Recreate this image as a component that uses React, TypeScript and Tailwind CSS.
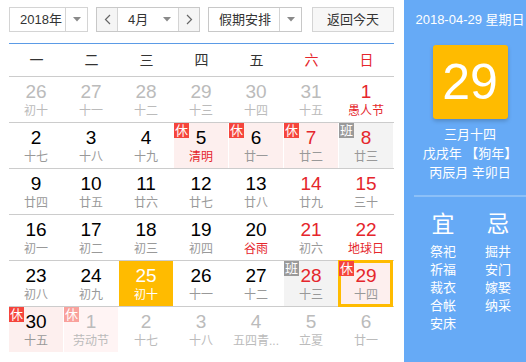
import React from "react";

type Cell = {
  d: number;
  l: string;
  other?: boolean;
  red?: boolean;
  lred?: boolean;
  badge?: "休" | "班";
  faded?: boolean;
  today?: boolean;
  selected?: boolean;
};

const rows: Cell[][] = [
  [
    { d: 26, l: "初十", other: true },
    { d: 27, l: "十一", other: true },
    { d: 28, l: "十二", other: true },
    { d: 29, l: "十三", other: true },
    { d: 30, l: "十四", other: true },
    { d: 31, l: "十五", other: true },
    { d: 1, l: "愚人节", red: true, lred: true },
  ],
  [
    { d: 2, l: "十七" },
    { d: 3, l: "十八" },
    { d: 4, l: "十九" },
    { d: 5, l: "清明", lred: true, badge: "休" },
    { d: 6, l: "廿一", badge: "休" },
    { d: 7, l: "廿二", red: true, badge: "休" },
    { d: 8, l: "廿三", red: true, badge: "班" },
  ],
  [
    { d: 9, l: "廿四" },
    { d: 10, l: "廿五" },
    { d: 11, l: "廿六" },
    { d: 12, l: "廿七" },
    { d: 13, l: "廿八" },
    { d: 14, l: "廿九", red: true },
    { d: 15, l: "三十", red: true },
  ],
  [
    { d: 16, l: "初一" },
    { d: 17, l: "初二" },
    { d: 18, l: "初三" },
    { d: 19, l: "初四" },
    { d: 20, l: "谷雨", lred: true },
    { d: 21, l: "初六", red: true },
    { d: 22, l: "地球日", red: true, lred: true },
  ],
  [
    { d: 23, l: "初八" },
    { d: 24, l: "初九" },
    { d: 25, l: "初十", today: true },
    { d: 26, l: "十一" },
    { d: 27, l: "十二" },
    { d: 28, l: "十三", red: true, badge: "班" },
    { d: 29, l: "十四", red: true, badge: "休", selected: true },
  ],
  [
    { d: 30, l: "十五", badge: "休" },
    { d: 1, l: "劳动节", other: true, badge: "休", faded: true },
    { d: 2, l: "十七", other: true },
    { d: 3, l: "十八", other: true },
    { d: 4, l: "五四青...", other: true },
    { d: 5, l: "立夏", other: true },
    { d: 6, l: "廿一", other: true },
  ],
];

const FONT = { fontFamily: '"Liberation Sans", "Noto Sans CJK SC", sans-serif' };

function Caret() {
  return (
    <svg width="8" height="5" viewBox="0 0 8 5">
      <path d="M0 0 L8 0 L4 4.5 Z" fill="#8a8a8a" />
    </svg>
  );
}

function DayCell({ c }: { c: Cell }) {
  let bg = "bg-white";
  if (c.today) bg = "bg-[#ffbb00]";
  else if (c.badge === "班") bg = "bg-[#f3f3f3]";
  else if (c.badge === "休") bg = c.faded ? "bg-[#fff4f4]" : "bg-[#fdefee]";

  let numColor = "text-black";
  let lunColor = "text-[#999999]";
  if (c.other) {
    numColor = "text-[#bbbbbb]";
    lunColor = "text-[#bbbbbb]";
  }
  if (c.red && !c.other) numColor = "text-[#e5262c]";
  if (c.lred) lunColor = "text-[#e5262c]";
  if (c.today) {
    numColor = "text-white";
    lunColor = "text-white";
  }

  return (
    <div className="w-[55px] h-[45px] pr-px">
      <div className={`relative h-full flex flex-col items-center pt-[4px] ${bg}`}>
        {c.selected && (
          <div className="absolute left-[-1px] right-0 top-[-1px] bottom-[-1px] border-[3px] border-[#ffbb00]" />
        )}
        {c.badge && (
          <div
            className={`absolute left-0 top-0 w-[15px] h-[15px] text-[13px] leading-[15px] text-center text-white ${
              c.badge === "班" ? "bg-[#9a9a9a]" : c.faded ? "bg-[#f9a19c]" : "bg-[#f5453c]"
            }`}
          >
            {c.badge}
          </div>
        )}
        <div className={`relative text-[19px] leading-[22px] ${numColor}`}>{c.d}</div>
        <div className={`relative text-[12px] leading-[16px] whitespace-nowrap ${lunColor}`}>{c.l}</div>
      </div>
    </div>
  );
}

export default function App() {
  const week = ["一", "二", "三", "四", "五", "六", "日"];
  return (
    <div className="w-[526px] h-[362px] flex bg-white overflow-hidden" style={FONT}>
      <div className="w-[404px] pl-[9px] pr-[10px] pt-[7px]">
        <div className="flex items-center h-[25px] text-[13px] text-[#333333]">
          <div className="flex w-[79px] h-[25px] border border-[#d4d4d4] bg-white">
            <div className="w-[55px] pl-[10px] leading-[23px]">2018年</div>
            <div className="flex-1 border-l border-[#d4d4d4] flex items-center justify-center">
              <Caret />
            </div>
          </div>
          <div className="ml-[8px] flex w-[104px] h-[25px] border border-[#c8c8c8]">
            <div className="w-[21px] bg-[#f5f5f5] border-r border-[#d4d4d4] flex items-center justify-center">
              <svg width="7" height="11" viewBox="0 0 7 11">
                <path d="M6 1 L1.5 5.5 L6 10" stroke="#666" strokeWidth="1.2" fill="none" />
              </svg>
            </div>
            <div className="w-[60px] bg-white flex items-center pl-[10px] pr-[7px] justify-between">
              <span className="leading-[23px]">4月</span>
              <Caret />
            </div>
            <div className="flex-1 bg-[#f5f5f5] border-l border-[#d4d4d4] flex items-center justify-center">
              <svg width="7" height="11" viewBox="0 0 7 11">
                <path d="M1 1 L5.5 5.5 L1 10" stroke="#666" strokeWidth="1.2" fill="none" />
              </svg>
            </div>
          </div>
          <div className="ml-[8px] flex w-[94px] h-[25px] border border-[#c8c8c8] bg-white">
            <div className="w-[70px] pl-[10px] leading-[23px]">假期安排</div>
            <div className="flex-1 border-l border-[#d4d4d4] flex items-center justify-center">
              <Caret />
            </div>
          </div>
          <div className="ml-[10px] w-[82px] h-[25px] border border-[#d4d4d4] bg-[#f7f7f7] text-center leading-[23px]">
            返回今天
          </div>
        </div>
        <div className="mt-[11px] h-px bg-[#5b9be6]" />
        <div className="grid grid-cols-7 h-[33px] border-b border-[#cccccc] items-center text-[14px]">
          {week.map((w, i) => (
            <div key={w} className={`text-center ${i >= 5 ? "text-[#e5262c]" : "text-[#333333]"}`}>
              {w}
            </div>
          ))}
        </div>
        {rows.map((r, ri) => (
          <div key={ri} className={`flex ${ri < rows.length - 1 ? "border-b border-[#cccccc]" : ""}`}>
            {r.map((c, ci) => (
              <DayCell key={ci} c={c} />
            ))}
          </div>
        ))}
      </div>
      <div className="flex-1 bg-[#66aaf6] pl-[10px] text-white">
        <div className="pt-[10px] text-[13px] leading-[20px] text-center whitespace-nowrap">2018-04-29 星期日</div>
        <div className="mt-[15px] mx-auto w-[75px] h-[74px] rounded-[3px] bg-[#ffbb00] shadow-[0_2px_4px_rgba(0,0,0,0.2)] flex items-center justify-center text-[50px] leading-none">
          29
        </div>
        <div className="mt-[6px] text-[13px] leading-[19px] text-center">
          <div>三月十四</div>
          <div className="whitespace-nowrap">戊戌年 【狗年】</div>
          <div>丙辰月 辛卯日</div>
        </div>
        <div className="mt-[13px] h-[2px] bg-[#8cc0f8]" />
        <div className="flex mt-[12px]">
          <div className="w-[58px] flex flex-col items-center">
            <div className="text-[23px] leading-[30px] mb-[4px]">宜</div>
            {["祭祀", "祈福", "裁衣", "合帐", "安床"].map((t) => (
              <div key={t} className="text-[13px] leading-[18px]">{t}</div>
            ))}
          </div>
          <div className="w-[52px] flex flex-col items-center">
            <div className="text-[23px] leading-[30px] mb-[4px]">忌</div>
            {["掘井", "安门", "嫁娶", "纳采"].map((t) => (
              <div key={t} className="text-[13px] leading-[18px]">{t}</div>
            ))}
          </div>
        </div>
      </div>
    </div>
  );
}
